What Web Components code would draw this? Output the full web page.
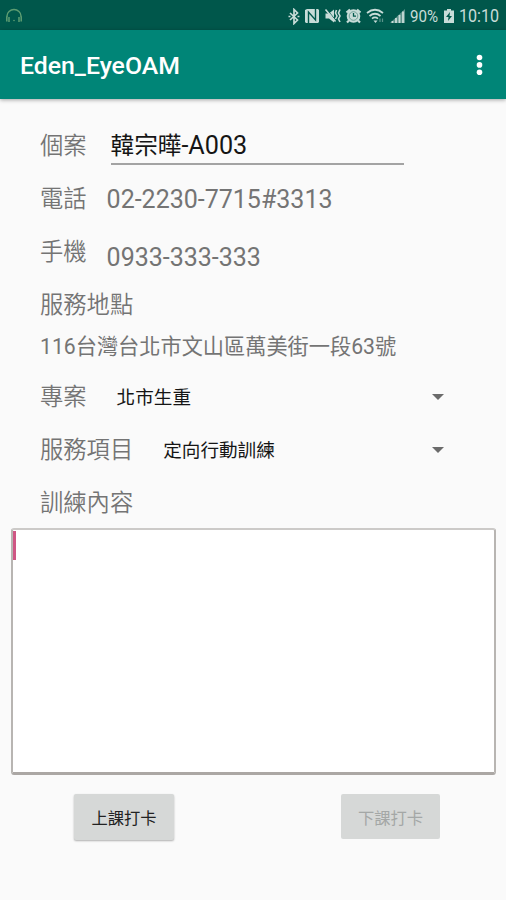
<!DOCTYPE html>
<html lang="zh-Hant">
<head>
<meta charset="utf-8">
<title>Eden_EyeOAM</title>
<style>
body {
  margin: 0;
  background: #fafafa;
  color: #747474;
  font-family: Roboto, "Noto Sans CJK TC", sans-serif;
}
</style>
</head>
<body>
<training-app></training-app>

<script>
function define(name, html, setup) {
  const template = document.createElement("template")
  template.innerHTML = html
  customElements.define(name, class extends HTMLElement {
    constructor() {
      super()
      this.attachShadow({mode: "open"})
      this.shadowRoot.appendChild(template.content.cloneNode(true))
      if (setup) setup(this.shadowRoot, this)
    }
  })
}

define("status-bar", `
<style>
:host {
  display: flex;
  align-items: center;
  height: 30px;
  padding: 2px 7px 0 5px;
  box-sizing: border-box;
  background: #00574b;
  color: #c8dcd8;
  font-size: 17px;
}
svg { display: block; fill: none; stroke: currentColor; flex: none; }
.headset { color: #5d9d72; margin-right: auto; }
.icons { display: flex; align-items: center; gap: 3.8px; margin-right: 4px; }
.time { margin-left: 4px; font-size: 17.5px; }
.level, .time { line-height: 20px; display: inline-block; white-space: nowrap; }
.level { width: 30px; margin-right: 3px; }
.level span, .time span { display: inline-block; transform-origin: 0 50%; }
.level span { transform: scaleX(.89); }
.time { width: 40px; }
.time span { transform: scaleX(.92); }
</style>
<svg class="headset" width="18" height="16" viewBox="0 0 18 16" stroke-width="1.4">
  <path d="M2 9V8a7 6.5 0 0 1 14 0v1"/>
  <path d="M1.8 8.5v5M4 9v5M14 9v5M16.2 8.5v5" stroke-width="1.5"/>
  <circle cx="9" cy="12.5" r=".8" fill="currentColor" stroke="none"/>
</svg>
<div class="icons">
  <svg width="12" height="17" viewBox="0 0 12 17" stroke-width="1.7"><path d="M2 5l7.500 7L6 15.500V1.500L9.500 5 2 12M.5 8.500h2M9.500 8.500h2"/></svg>
  <svg width="16" height="16" viewBox="0 0 16 16"><path d="M1 2l2-1h11l1 1v12l-1 1H2l-1-1z" fill="currentColor" stroke="none"/><path d="M4.500 15V4l7 8V1" stroke="#00574b" stroke-width="1.400"/></svg>
  <svg width="18" height="16" viewBox="0 0 18 16"><path d="M1.500 5.500H5L10 1.500v13L5 10.500H1.500z" fill="currentColor" stroke="none"/><path d="M2.500 1l9 11" stroke="#00574b" stroke-width="1"/><path d="M1.500 1.500l10 12M12.500 2l-1 3 1.500 3-1.500 3M16 1.500l-1.500 3.500 1.500 3-1.500 3 1.500 3" stroke-width="1.600"/></svg>
  <svg width="17" height="16" viewBox="0 0 17 16"><circle cx="8.500" cy="8" r="6.800" fill="currentColor" stroke="none"/><path d="M1.500 4.500L5 1.500M12 1.500l3.500 3M4 12.500l-2 2M13 12.500l2 2" stroke-width="2.200"/><circle cx="8.500" cy="8" r="4.300" stroke="#5b938a" stroke-width=".8"/><path d="M8.500 5v3.200H11" stroke="#00574b" stroke-width="1.300"/></svg>
  <svg width="19" height="16" viewBox="0 0 19 16" stroke-width="1.700"><path d="M1 5q8-6.500 16 0M3.500 8q5.500-4.500 11 0M6 10.700q3-2.500 6 0"/><path d="M7.500 12.500h4L9.500 15z" fill="currentColor" stroke="none"/><path d="M14 10.500v3.500M16.500 10.500v3.500" stroke="#5b938a" stroke-width="1.200"/></svg>
  <svg width="17" height="16" viewBox="0 0 17 16"><path d="M1 15L16 1v14z" fill="#5b938a" stroke="none"/><path d="M3.500 15v-2M7 15V10M10.500 15V7M14 15V3.500" stroke-width="1.800"/></svg>
</div>
<span class="level"><span>90%</span></span>
<svg width="12" height="16" viewBox="0 0 12 16"><path d="M1 2.500h3V1h4v1.500h3V15H1z" fill="currentColor" stroke="none"/><path d="M7 4L3 9h2.500L5 13l4-5H6.500z" fill="#00574b" stroke="none"/></svg>
<span class="time"><span>10:10</span></span>
`)

define("app-bar", `
<style>
:host {
  display: flex;
  align-items: center;
  justify-content: space-between;
  height: 69px;
  padding: 0 23px 0 20px;
  box-sizing: border-box;
  background: #008577;
  color: #fff;
  box-shadow: 0 1px 4px rgba(0, 0, 0, .35);
}
h1 { margin: 0; padding-top: 2px; font-size: 24.8px; font-weight: 500; line-height: 30px; }
svg { display: block; }
</style>
<h1><slot></slot></h1>
<svg width="7" height="22" viewBox="0 0 7 22" fill="#fff"><circle cx="3.500" cy="3.500" r="2.800"/><circle cx="3.500" cy="10.900" r="2.800"/><circle cx="3.500" cy="18.300" r="2.800"/></svg>
`)

// one labelled line of the form
define("form-row", `
<style>
:host {
  display: flex;
  align-items: center;
  height: 53px;
  padding-left: 40px;
}
.label { padding-top: 1px; font-size: 23.3px; line-height: 30px; white-space: nowrap; font-weight: 350; }
</style>
<span class="label"></span>
<slot></slot>
`, (root, host) => {
  root.querySelector(".label").textContent = host.getAttribute("label")
})

define("text-value", `
<style>
:host { display: block; margin-left: 20px; padding-top: 2px; font-size: 25px; line-height: 30px; white-space: nowrap; }
:host([low]) { padding-top: 12px; }
</style>
<slot></slot>
`)

define("text-entry", `
<style>
:host {
  display: block;
  width: 293px;
  height: 39px;
  margin-left: 24px;
  border-bottom: 2px solid #a3a3a3;
  box-sizing: border-box;
  color: #151515;
  font-size: 25.200px;
  line-height: 40px;
}
.cjk { font-size: 23.600px; }
</style>
<span class="cjk"><slot name="name"></slot></span><slot></slot>
`)

define("drop-down", `
<style>
:host {
  display: flex;
  flex: 1;
  align-items: center;
  justify-content: space-between;
  margin-left: 30px;
  padding-right: 62px;
  color: #151515;
  font-size: 18.600px;
  line-height: 26px;
}
.text { padding-top: 2px; }
.arrow { border: 6px solid transparent; border-top-color: #6b6b6b; border-bottom: 0; }
</style>
<span class="text"><slot></slot></span>
<span class="arrow"></span>
`)

define("note-box", `
<style>
:host {
  display: block;
  height: 247px;
  margin: -1px 10px 0 11px;
  padding: 1px 0;
  box-sizing: border-box;
  background: #fff;
  border: 2px solid #b8b5b2;
  border-top-color: #cccac8;
  border-bottom: 3px solid #aba7a4;
  border-radius: 3px;
}
.caret { display: block; width: 3px; height: 29px; background: #cf5784; }
</style>
<span class="caret"></span>
`)

define("punch-button", `
<style>
:host { display: block; }
button {
  display: block;
  width: 100px;
  height: 46px;
  padding: 0;
  border: 0;
  border-radius: 2px;
  background: #d6d8d7;
  color: #222;
  font: inherit;
  font-size: 16.300px;
  box-shadow: 0 1px 2px rgba(0, 0, 0, .3);
}
button:disabled { width: 99px; height: 45px; color: #a4a7a6; box-shadow: none; }
</style>
<button><slot></slot></button>
`, (root, host) => {
  root.querySelector("button").disabled = host.hasAttribute("disabled")
})

define("training-app", `
<style>
:host { display: flex; flex-direction: column; height: 900px; }
app-bar { margin-bottom: 20px; }
.address { height: 39px; padding: 1px 0 0 40px; box-sizing: border-box; font-size: 21.200px; line-height: 30px; white-space: nowrap; }
.actions { display: flex; justify-content: space-between; padding: 19px 66px 0 74px; }
</style>
<status-bar></status-bar>
<app-bar>Eden_EyeOAM</app-bar>
<form-row label="個案"><text-entry><span slot="name">韓宗曄</span>-A003</text-entry></form-row>
<form-row label="電話"><text-value>02-2230-7715#3313</text-value></form-row>
<form-row label="手機"><text-value low>0933-333-333</text-value></form-row>
<form-row label="服務地點"></form-row>
<div class="address">116台灣台北市文山區萬美街一段63號</div>
<form-row label="專案"><drop-down>北市生重</drop-down></form-row>
<form-row label="服務項目"><drop-down>定向行動訓練</drop-down></form-row>
<form-row label="訓練內容"></form-row>
<note-box></note-box>
<div class="actions">
  <punch-button>上課打卡</punch-button>
  <punch-button disabled>下課打卡</punch-button>
</div>
`)
</script>
</body>
</html>
